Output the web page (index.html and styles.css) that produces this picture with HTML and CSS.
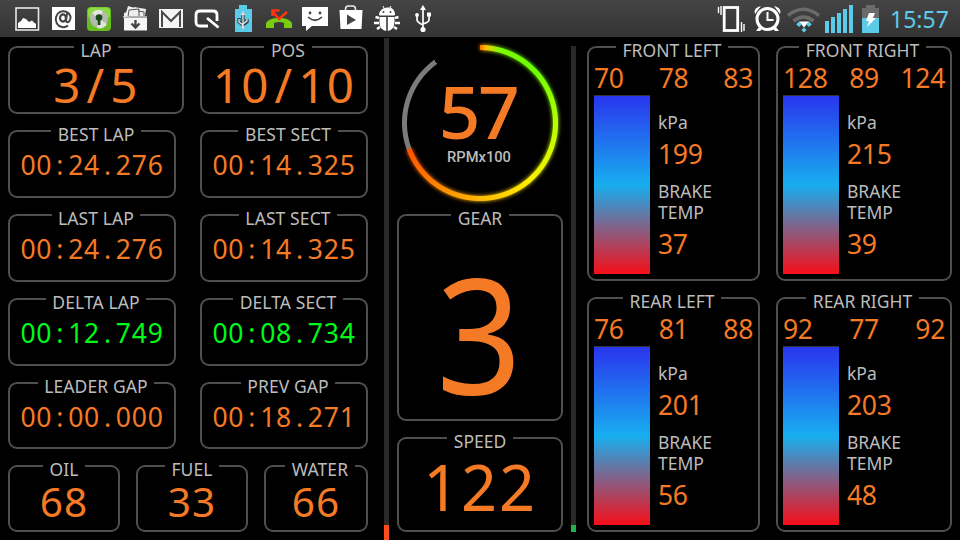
FILE: index.html
```html
<!DOCTYPE html>
<html lang="en">
<head>
<meta charset="utf-8">
<title>Race Dashboard</title>
<link rel="stylesheet" href="styles.css">
</head>
<body>
<header class="status">
  <div class="notices">
    <svg viewBox="0 0 36 37"><rect x="7" y="8" width="22.500" height="22" fill="none" stroke="#e8e8e8" stroke-width="1.600"/><path d="M9 28V23l3-2 2-3 3 1 3 3 3-1.500 2 2 2 1.500V28z" fill="#fff"/></svg>
    <svg viewBox="0 0 36 37"><rect x="7" y="7" width="23" height="23" fill="#fff"/><ellipse cx="18" cy="18" rx="3" ry="3.600" fill="none" stroke="#444" stroke-width="2.200"/><path d="M22 13.500l-1 7.500q1 2 3 .500q2-2 1.500-5a7.600 8 0 1 0-2.500 9" fill="none" stroke="#444" stroke-width="2"/></svg>
    <svg viewBox="0 0 36 37"><rect x="6" y="7" width="24" height="24" rx="4" fill="#67bd20"/><rect x="7" y="7.500" width="22" height="11" rx="4" fill="#8cdb45"/><circle cx="18" cy="19" r="9" fill="#b5b8b3"/><path d="M18 19L11 13A9 9 0 0 1 22 11zM18 19l8 5a9 9 0 0 1-10 4z" fill="#e1e4df"/><circle cx="18" cy="17.500" r="3.300" fill="#174a17"/><path d="M16.800 18h2.600v7h-2.600z" fill="#174a17"/></svg>
    <svg viewBox="0 0 36 37"><path d="M8 16L11 6l7 2-1 8zM17 7l12 2-1 7H17zM7 17v-4l3-1 1 5z" fill="#eee"/><path d="M11 17l1-7 10-1v8M21 11l6 1v5" fill="none" stroke="#555"/><path d="M7 18h23v12.500H7z" fill="#f5f5f5"/><path d="M6 17h24" stroke="#ddd" stroke-width="1.400"/><path d="M18.500 20v6M14.500 23.500l4 4 4-4" fill="none" stroke="#444" stroke-width="2.300"/></svg>
    <svg viewBox="0 0 36 37"><rect x="6" y="9" width="24" height="19" fill="#f4f4f4"/><path d="M9 27V12l9 9 9-9v15" fill="none" stroke="#494949" stroke-width="2"/></svg>
    <svg viewBox="0 0 36 37"><path d="M19 26H11q-4 0-4-4V15q0-4 4-4h13q4 0 4 4v6" fill="none" stroke="#fff" stroke-width="2.800"/><path d="M18 18l11.500 9.500" stroke="#fff" stroke-width="2.800"/></svg>
    <svg viewBox="0 0 36 37"><path d="M10 9h4V5h8v4h5v23H10z" fill="#5ccbe9"/><path d="M18 28V13m-4 5v4l4 3m4-6v3l-4 3" fill="none" stroke="#304b55" stroke-width="3.400"/><path d="M18 27V14m-4 5v3l4 3m4-6v2l-4 3" fill="none" stroke="#eee" stroke-width="1.200"/><path d="M15.500 15l2.500-4 2.500 4z" fill="#ddd"/><circle cx="18" cy="27" r="1.800" fill="#ddd"/></svg>
    <svg viewBox="0 0 36 37"><path d="M5 28v-5q3-5 13-5t13 5v5h-8v-5q-5-2-10 0v5z" fill="#79cc10"/><path d="M26 12l-8 7-6-7M11.500 16v-5.500h7" fill="none" stroke="#ff3411" stroke-width="2.600"/></svg>
    <svg viewBox="0 0 36 37"><path d="M5 7h26v19H15l-6 5v-5H5z" fill="#fff"/><path d="M11 17q7 6.500 14 0" fill="none" stroke="#444" stroke-width="1.700"/><circle cx="13" cy="13" r="1.400" fill="#444"/><circle cx="23" cy="13" r="1.400" fill="#444"/></svg>
    <svg viewBox="0 0 36 37"><path d="M12.500 11V9q0-3 3-3h4q3 0 3 3v2" fill="none" stroke="#eee" stroke-width="1.500"/><path d="M6.500 10h23l-1 19h-21z" fill="#fff"/><path d="M14 14.500l9 5.500-9 5z" fill="#454545"/></svg>
    <svg viewBox="0 0 36 37"><path d="M10.500 15q0-6 7.500-7t7.500 7zM14 6l2 4M22 6l-2 4" fill="#fff" stroke="#fff"/><path d="M10.500 17h6.700v14q-6.700-1-6.700-9zM18.800 17h6.700v5q0 8-6.700 9z" fill="#fff"/><path d="M10 18l-3.500-1m3.500 6H5m6 4l-3 2M26 18l3.500-1m-3.500 6h5m-6 4l3 2" stroke="#fff" stroke-width="2.400"/><circle cx="14.500" cy="12" r="1" fill="#444"/><circle cx="21.500" cy="12" r="1" fill="#444"/></svg>
    <svg viewBox="0 0 36 37"><path d="M18 29V9M12 15v5q0 2 6 5m6-9v4q0 2-6 4" fill="none" stroke="#fff" stroke-width="1.700"/><path d="M15 10l3-5 3 5z" fill="#fff"/><circle cx="12" cy="15" r="1.900" fill="#fff"/><path d="M22 12.500h4v4h-4z" fill="#fff"/><circle cx="18" cy="29.500" r="2.600" fill="#fff"/></svg>
  </div>
  <div class="system">
    <svg viewBox="0 0 36 37"><rect x="11.200" y="7.500" width="13.500" height="23" fill="none" stroke="#fff" stroke-width="2.800"/><path d="M5.500 7v6M8 6v9M28.500 22v10M31 24v7" stroke="#fff" stroke-width="1.400"/></svg>
    <svg viewBox="0 0 36 37"><circle cx="18.500" cy="19" r="10.500" fill="none" stroke="#fff" stroke-width="3"/><path d="M18.500 12v8h6" fill="none" stroke="#fff" stroke-width="2"/><path d="M6 14q-2-6 6-8zM31 14q2-6-6-8zM10 27l-3 4h4l2-2M27 27l3 4h-4l-2-2" fill="#fff"/></svg>
    <svg viewBox="0 0 36 37"><path d="M3 15.500q15-12.500 31 0M8.500 21q10-8 20 0" fill="none" stroke="#6b6b6b" stroke-width="3.600"/><path d="M14 21.500h10l-5 6z" fill="#fff"/><path d="M12.500 23l3 2.500M25.500 23l-3 2.500" stroke="#5ccbe9" stroke-width="4"/><path d="M19 27.500l2.500 2.500-2.500 2.500-2.500-2.500z" fill="#5ccbe9"/></svg>
    <svg viewBox="0 0 36 37"><path d="M4 21h4v12H4zM10 17h4v16h-4zM16 13h4v20h-4zM22 9h4v24h-4zM28 5h4v28h-4z" fill="#5ccbe9"/></svg>
    <svg class="battery" viewBox="0 0 28 37"><path d="M5 8h4V5h9v3h4v10H5z" fill="#6b6b6b"/><path d="M5 18h17v15H5z" fill="#5ccbe9"/><path d="M12 13h6l-2 5h3l-9 9 2-6H9z" fill="#fff"/></svg>
    <time class="clock">15:57</time>
  </div>
</header>

<main class="dash">
  <section class="timing">
    <div class="row">
      <article class="panel wide"><h2>LAP</h2><p class="mono count">3<i>/</i>5</p></article>
      <article class="panel offset"><h2>POS</h2><p class="mono count">10<i>/</i>10</p></article>
    </div>
    <div class="row">
      <article class="panel offset"><h2>BEST LAP</h2><p class="mono timer">00<i>:</i>24<i>.</i>276</p></article>
      <article class="panel offset"><h2>BEST SECT</h2><p class="mono timer">00<i>:</i>14<i>.</i>325</p></article>
    </div>
    <div class="row">
      <article class="panel offset"><h2>LAST LAP</h2><p class="mono timer">00<i>:</i>24<i>.</i>276</p></article>
      <article class="panel offset"><h2>LAST SECT</h2><p class="mono timer">00<i>:</i>14<i>.</i>325</p></article>
    </div>
    <div class="row">
      <article class="panel offset"><h2>DELTA LAP</h2><p class="mono timer good">00<i>:</i>12<i>.</i>749</p></article>
      <article class="panel offset"><h2>DELTA SECT</h2><p class="mono timer good">00<i>:</i>08<i>.</i>734</p></article>
    </div>
    <div class="row">
      <article class="panel offset"><h2>LEADER GAP</h2><p class="mono timer">00<i>:</i>00<i>.</i>000</p></article>
      <article class="panel offset"><h2>PREV GAP</h2><p class="mono timer">00<i>:</i>18<i>.</i>271</p></article>
    </div>
    <div class="fluids">
      <article class="panel"><h2>OIL</h2><p class="mono fluid">68</p></article>
      <article class="panel"><h2>FUEL</h2><p class="mono fluid">33</p></article>
      <article class="panel offset"><h2>WATER</h2><p class="mono fluid">66</p></article>
    </div>
  </section>

  <div class="meter brake"><span></span></div>

  <section class="engine">
    <div class="dial">
      <div class="glow"><div class="arc lit"></div></div>
      <div class="arc full"></div>
      <div class="reading"><p class="rpm">57</p><p class="unit">RPMx100</p></div>
    </div>
    <article class="panel gear"><h2>GEAR</h2><p class="mono">3</p></article>
    <article class="panel speed"><h2>SPEED</h2><p class="mono">122</p></article>
  </section>

  <div class="meter throttle"><span></span></div>

  <section class="tires">
    <article class="panel tire"><h2>FRONT LEFT</h2>
      <div class="temps"><span>70</span><span>78</span><span>83</span></div>
      <div class="detail"><div class="heat"></div><dl><dt>kPa</dt><dd>199</dd><dt class="second">BRAKE<br>TEMP</dt><dd>37</dd></dl></div>
    </article>
    <article class="panel tire"><h2>FRONT RIGHT</h2>
      <div class="temps"><span>128</span><span>89</span><span>124</span></div>
      <div class="detail"><div class="heat"></div><dl><dt>kPa</dt><dd>215</dd><dt class="second">BRAKE<br>TEMP</dt><dd>39</dd></dl></div>
    </article>
    <article class="panel tire"><h2>REAR LEFT</h2>
      <div class="temps"><span>76</span><span>81</span><span>88</span></div>
      <div class="detail"><div class="heat"></div><dl><dt>kPa</dt><dd>201</dd><dt class="second">BRAKE<br>TEMP</dt><dd>56</dd></dl></div>
    </article>
    <article class="panel tire"><h2>REAR RIGHT</h2>
      <div class="temps"><span>92</span><span>77</span><span>92</span></div>
      <div class="detail"><div class="heat"></div><dl><dt>kPa</dt><dd>203</dd><dt class="second">BRAKE<br>TEMP</dt><dd>48</dd></dl></div>
    </article>
  </section>
</main>
</body>
</html>
```
FILE: styles.css
```css
* { box-sizing: border-box; margin: 0; padding: 0; }

body {
  width: 960px;
  height: 540px;
  overflow: hidden;
  background: #000;
  color: #bcbcbc;
  font-family: "Noto Sans", "Open Sans", sans-serif;
}

/* Status bar */
.status {
  display: flex;
  justify-content: space-between;
  height: 37px;
  padding: 0 9px;
  background: linear-gradient(#454545, #333);
}
.notices, .system { display: flex; }
.status svg { display: block; width: 36px; height: 37px; }
.status svg.battery { width: 28px; }
.clock {
  width: 61px;
  margin-left: 5px;
  color: #5ccbe9;
  font-size: 23px;
  line-height: 38px;
  white-space: nowrap;
}

/* Columns */
.dash { display: flex; height: 503px; }
.timing {
  display: flex;
  flex-direction: column;
  gap: 16px;
  width: 384px;
  padding: 9px 16px 8px 8px;
}
.row { display: grid; grid-template-columns: 168px 168px; column-gap: 24px; height: 68px; }
.wide { width: 176px; }
.fluids { display: grid; grid-template-columns: 112px 112px 104px; column-gap: 16px; height: 67px; }
.row:nth-child(5) { height: 67px; }

/* Panels */
.panel {
  border: 2px solid #4f4f4f;
  border-radius: 9px;
}
.panel h2 {
  position: relative;
  width: fit-content;
  height: 16px;
  margin: -6px auto 0;
  padding: 0 6.500px;
  background: #000;
  font-size: 17.5px;
  font-weight: 400;
  line-height: 16px;
  white-space: nowrap;
}
.offset h2 { left: 4px; }
.timing h2 { letter-spacing: .1px; }
.tire h2 { left: -1.500px; }

.mono {
  color: #f57a26;
  letter-spacing: .028em;
  text-align: center;
  white-space: nowrap;
}
.mono i {
  display: inline-block;
  width: .6em;
  font-style: normal;
}
.count { font-size: 47.5px; line-height: 54px; }
.timer { margin-top: 5px; font-size: 26.5px; line-height: 36px; }
.fluid { margin-top: 1px; font-size: 40.5px; line-height: 48px; }
.good { color: #00f81a; }

/* Pedal meters */
.meter { display: flex; flex-direction: column; justify-content: flex-end; width: 5px; background: #2b2927; }
.brake { margin-top: 1px; }
.brake span { height: 15px; background: #ff4c1c; }
.throttle { margin: 9px 0 8px; }
.throttle span { height: 7px; background: #22b14c; }

/* Engine */
.engine {
  display: flex;
  flex-direction: column;
  width: 182px;
  padding: 0 8px 8px;
}
.dial { display: grid; place-items: center; height: 177px; padding-bottom: 6px; }
.dial > * { grid-area: 1 / 1; }
.arc {
  width: 158px;
  height: 158px;
  border-radius: 50%;
  mask: radial-gradient(circle, transparent 72.5px, #000 73.5px, #000 77.5px, transparent 78.5px);
}
.lit { background: conic-gradient(#ff5a00, #ffd000 4deg, #7dff00 15deg, #6cff00 45deg, #b4ff00 90deg, #ffee00 140deg, #ffba00 180deg, #ff8400 215deg, #ff5000 250deg, transparent 250deg); }
.full { background: conic-gradient(#ff6a00, #ffc000 4deg, #7dff00 15deg, #6cff00 45deg, #b4ff00 90deg, #ffee00 140deg, #ffba00 180deg, #ff8400 215deg, #ff5000 250deg, #7b7b7b 250deg 324deg, transparent 324deg); }
.glow { filter: blur(2px); }
.reading { padding-bottom: 6px; text-align: center; }
.rpm { margin-left: -4px; color: #f57a26; font-size: 73px; font-weight: 500; letter-spacing: -2.500px; line-height: 74px; }
.unit { margin-left: -2px; font-family: Roboto, sans-serif; font-size: 14.7px; font-weight: 500; line-height: 18px; }
.gear { height: 207px; margin-bottom: 16px; }
.gear .mono { margin-top: 16px; font-size: 161px; line-height: 180px; letter-spacing: 0; transform: translateX(-1px) scaleX(.93); }
.speed { height: 95px; }
.speed .mono { margin-top: 3px; font-size: 63px; line-height: 70px; }

/* Tires */
.tires {
  display: grid;
  grid-template: 235px 235px / 173px 176px;
  gap: 16px;
  padding: 9px 0 0 11px;
}
.tire { padding: 0 5px; }
.temps {
  display: flex;
  justify-content: space-between;
  margin-top: 5px;
  line-height: 30px;
}
.temps, .tire dd { color: #f57a26; font-size: 26.5px; letter-spacing: -.3px; }
.detail { display: flex; gap: 8px; margin-top: 2px; }
.heat {
  width: 56px;
  height: 179px;
  border-top: 1px solid #333;
  background: linear-gradient(#2935ed, #18aeef 50%, #f60e18);
}
.tire dl { padding-top: 17px; font-size: 17.5px; line-height: 21px; }
.tire dd { margin-top: 4px; line-height: 34px; }
.tire .second { margin-top: 10px; }
```
